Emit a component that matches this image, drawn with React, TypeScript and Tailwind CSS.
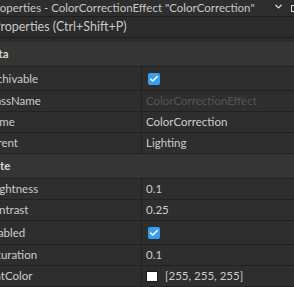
import { Check, ChevronDown } from 'lucide-react';

type Row =
  | { kind: 'header'; label: string }
  | { kind: 'text'; label: string; value: string; dim?: boolean }
  | { kind: 'check'; label: string }
  | { kind: 'color'; label: string; value: string };

const rows: Row[] = [
  { kind: 'header', label: 'Data' },
  { kind: 'check', label: 'Archivable' },
  { kind: 'text', label: 'ClassName', value: 'ColorCorrectionEffect', dim: true },
  { kind: 'text', label: 'Name', value: 'ColorCorrection' },
  { kind: 'text', label: 'Parent', value: 'Lighting' },
  { kind: 'header', label: 'State' },
  { kind: 'text', label: 'Brightness', value: '0.1' },
  { kind: 'text', label: 'Contrast', value: '0.25' },
  { kind: 'check', label: 'Enabled' },
  { kind: 'text', label: 'Saturation', value: '0.1' },
  { kind: 'color', label: 'TintColor', value: '[255, 255, 255]' },
];

function Checkbox() {
  return (
    <div className="w-[12px] h-[12px] rounded-[2px] bg-[#3a9df0] flex items-center justify-center">
      <Check size={10} strokeWidth={3.5} color="white" />
    </div>
  );
}

function PropRow({ row }: { row: Row }) {
  if (row.kind === 'header') {
    return (
      <div className="h-[25px] bg-[#353535] border-b border-[#222222] flex items-center overflow-hidden">
        <span className="ml-[-16px] font-bold text-[#d8d8d8] whitespace-nowrap">{row.label}</span>
      </div>
    );
  }
  const tall = row.kind === 'check';
  return (
    <div className={`${tall ? 'h-[24px]' : 'h-[21px]'} flex border-b border-[#222222]`}>
      <div className="w-[142px] shrink-0 flex items-center overflow-hidden border-r border-[#222222]">
        <span className="ml-[-15px] text-[#cccccc] whitespace-nowrap">{row.label}</span>
      </div>
      <div className="flex-1 flex items-center overflow-hidden">
        {row.kind === 'check' && (
          <div className="ml-[6px]">
            <Checkbox />
          </div>
        )}
        {row.kind === 'text' && (
          <span className={`ml-[4px] whitespace-nowrap ${row.dim ? 'text-[#555555]' : 'text-[#cccccc]'}`}>
            {row.value}
          </span>
        )}
        {row.kind === 'color' && (
          <div className="ml-[4px] flex items-center gap-[7px]">
            <div className="w-[12px] h-[11px] bg-white border border-[#1a1a1a]" />
            <span className="text-[#cccccc] whitespace-nowrap">{row.value}</span>
          </div>
        )}
      </div>
    </div>
  );
}

export default function App() {
  return (
    <div
      className="w-[294px] h-[287px] overflow-hidden bg-[#2e2e2e] text-[11.5px]"
      style={{ fontFamily: 'Lato, "Noto Sans", sans-serif' }}
    >
      {/* window title */}
      <div className="h-[17px] bg-[#2e2e2e] border-b border-[#1e1e1e] flex items-center overflow-hidden relative">
        <span className="ml-[-11px] text-[11.5px] text-[#c8c8c8] whitespace-nowrap">
          Properties - ColorCorrectionEffect "ColorCorrection"
        </span>
        <ChevronDown size={11} strokeWidth={3} color="#e0e0e0" className="absolute left-[273px] top-[1px]" />
        <div className="absolute left-[291px] top-[5px] w-[8px] h-[7px] border border-[#e0e0e0]" />
      </div>

      {/* tool bar */}
      <div className="h-[21px] bg-[#2b2b2b] border-b border-[#1e1e1e] flex items-center overflow-hidden">
        <span className="ml-[-7px] text-[12.5px] text-[#c8c8c8] whitespace-nowrap">Properties (Ctrl+Shift+P)</span>
      </div>

      <div className="h-[4px] bg-[#2b2b2b]" />

      <div>
        {rows.map((r, i) => (
          <PropRow key={i} row={r} />
        ))}
      </div>
    </div>
  );
}
